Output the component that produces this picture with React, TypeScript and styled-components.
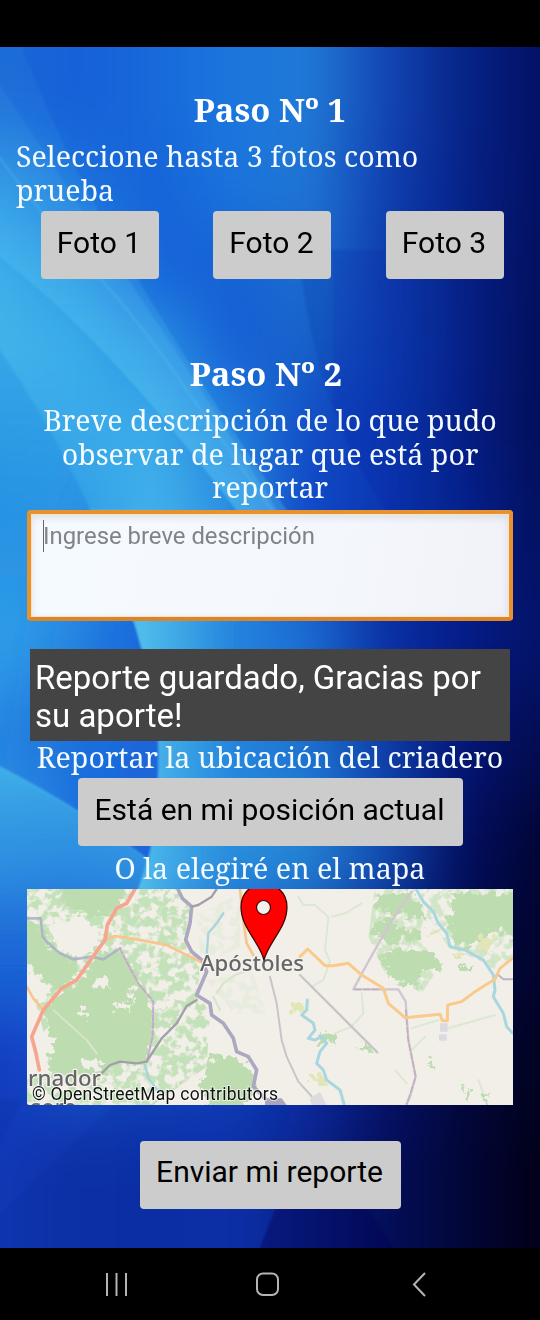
import React from "react";
import styled, { createGlobalStyle } from "styled-components";

const GlobalStyle = createGlobalStyle`
  html, body { margin: 0; padding: 0; background: #000; }
  * { box-sizing: border-box; }
`;

const SERIF = `"Noto Serif", "DejaVu Serif Condensed", "DejaVu Serif", serif`;
const SANS = `Roboto, "Liberation Sans", sans-serif`;

const Phone = styled.div`
  width: 540px;
  height: 1320px;
  display: flex;
  flex-direction: column;
  background: #000;
  overflow: hidden;
`;

const StatusBar = styled.header`
  height: 47px;
  flex: none;
`;

const Screen = styled.main`
  display: grid;
  height: 1201px;
  flex: none;
  overflow: hidden;
  > * { grid-area: 1 / 1; }
`;

const Form = styled.div`
  z-index: 1;
  display: flex;
  flex-direction: column;
  align-items: center;
  padding-top: 43px;
`;

const StepTitle = styled.h1<{ $shift?: number }>`
  margin: 0 0 9px;
  padding-right: ${(p) => p.$shift ?? 0}px;
  font: bold 32.8px/39px ${SERIF};
  font-stretch: semi-condensed;
  height: 40px;
  color: #fff;
  white-space: nowrap;
`;

const Copy = styled.p<{ $align?: string }>`
  margin: 0;
  width: 100%;
  padding: 0 16px;
  color: #f4fbff;
  text-align: ${(p) => p.$align ?? "center"};
`;

const Line = styled.span`
  display: block;
  font: 28.6px/33.5px ${SERIF};
  font-stretch: semi-condensed;
  white-space: nowrap;
`;

const PhotoRow = styled.div`
  display: flex;
  gap: 54.5px;
  margin: 5px 0 75px;
  padding-left: 4px;
`;

const Button = styled.button<{ $width: number }>`
  width: ${(p) => p.$width}px;
  height: 68px;
  border: 0;
  border-radius: 4px;
  background: #ccc;
  color: #000;
  padding: 0 1px 5px 0;
  font: 30px/36px ${SANS};
  white-space: nowrap;
`;

const Description = styled.div`
  width: 486px;
  height: 111px;
  margin: 6px 0 28px;
  padding: 5px 12px;
  border: 4px solid #e8922f;
  border-bottom-color: #dc842a;
  border-radius: 4px;
  background: linear-gradient(100deg, #f5fafe, #f5f9fe 45%, #f1f2f8);
  box-shadow: inset 0 0 0 1px #fde3c4, inset 0 3px 8px rgba(90, 100, 130, 0.18);
  font: 23.9px/34px ${SANS};
  color: #808488;
`;

const Caret = styled.span`
  display: inline-block;
  width: 1px;
  height: 32px;
  margin: -2px -1px 0 0;
  vertical-align: middle;
  background: #666;
`;

const Notice = styled.div`
  width: 480px;
  height: 92px;
  margin-bottom: -1px;
  padding: 10px 5px;
  background: #444;
  color: #fff;
  font: 33px/38.5px ${SANS};
  span { display: block; white-space: nowrap; }
`;

const Spaced = styled.div<{ $top: number }>`
  margin-top: ${(p) => p.$top}px;
  width: 100%;
  display: flex;
  flex-direction: column;
  align-items: center;
`;

const MapFrame = styled.div`
  width: 486px;
  height: 216px;
  svg { display: block; }
`;

const NavBar = styled.footer`
  height: 72px;
  flex: none;
  svg { display: block; }
`;

const bands: [number, number, string[]][] = [
  [-150, 300, ["#1a68d6", "#1560d8", "#1869da", "#1b76dd", "#2079d6", "#1346b4", "#062488", "#031064"]],
  [150, 80, ["#2a94e4", "#1c72dc", "#1562d8", "#1b74dc", "#1f74d4", "#1040b2", "#062288", "#031062"]],
  [230, 80, ["#40b0ea", "#2a98e4", "#1664da", "#1560d4", "#1c6ed0", "#0e3cae", "#052086", "#030f5e"]],
  [310, 80, ["#44b4ea", "#3caeea", "#2a94e2", "#1660d6", "#1862ca", "#0c3cb0", "#052088", "#030e5a"]],
  [390, 80, ["#36a6e8", "#3aaaea", "#3cacea", "#2080dc", "#124cc6", "#0b38b0", "#051e86", "#030e58"]],
  [470, 110, ["#2c98e6", "#309ce6", "#42b2ea", "#2c90e2", "#1048c8", "#0b36b0", "#04208c", "#031060"]],
  [580, 110, ["#2e9ce8", "#2a90e2", "#3caee6", "#2484de", "#1b6cd2", "#0a30a4", "#041c88", "#041368"]],
  [690, 100, ["#2684e0", "#1a66d8", "#34a0e4", "#2484de", "#1c70d0", "#0d3ca6", "#041678", "#030c50"]],
  [790, 110, ["#2f96e2", "#2a88e0", "#38a4e6", "#2a90de", "#2484d4", "#124cb2", "#020e60", "#010534"]],
  [900, 110, ["#1c68d8", "#1c68d8", "#1c66d4", "#1a62d0", "#1348b8", "#082388", "#020a4c", "#01042c"]],
  [1010, 110, ["#123cc0", "#1650c8", "#1448c4", "#1242c0", "#0c2ca6", "#06136e", "#02083c", "#010320"]],
  [1120, 300, ["#1138b4", "#0f30a8", "#0e2fa8", "#1030ac", "#0a2288", "#040e58", "#020638", "#010018"]],
];

function Wallpaper() {
  return (
    <svg width="540" height="1201" viewBox="0 47 540 1201" aria-hidden="true">
      <defs>
        {bands.map(([y, , stops]) => (
          <linearGradient key={y} id={`band${y + 200}`} gradientUnits="userSpaceOnUse" x1="0" y1="0" x2="540" y2="0">
            {stops.map((c, i) => <stop key={i} offset={i / 7} stopColor={c} />)}
          </linearGradient>
        ))}
        <linearGradient id="wing" gradientUnits="userSpaceOnUse" x1="20" y1="600" x2="155" y2="620">
          <stop offset="0" stopColor="#2a94e6" stopOpacity="0" />
          <stop offset=".65" stopColor="#1a6cdc" stopOpacity=".8" />
          <stop offset="1" stopColor="#1a66da" />
        </linearGradient>
        <linearGradient id="wingfade" gradientUnits="userSpaceOnUse" x1="0" y1="400" x2="0" y2="600">
          <stop offset="0" stopColor="#000" />
          <stop offset="1" stopColor="#fff" />
        </linearGradient>
        <mask id="wingmask" maskUnits="userSpaceOnUse" x="0" y="300" width="540" height="700">
          <rect y="300" width="540" height="700" fill="url(#wingfade)" />
        </mask>
        <linearGradient id="shade" gradientUnits="userSpaceOnUse" x1="0" y1="350" x2="0" y2="620">
          <stop offset="0" stopColor="#2288e0" stopOpacity=".3" />
          <stop offset=".6" stopColor="#2288e0" stopOpacity=".35" />
          <stop offset="1" stopColor="#2288e0" stopOpacity="0" />
        </linearGradient>
        <linearGradient id="dusk" gradientUnits="userSpaceOnUse" x1="300" y1="0" x2="430" y2="0">
          <stop offset="0" stopColor="#06209a" stopOpacity=".2" />
          <stop offset="1" stopColor="#06209a" stopOpacity="0" />
        </linearGradient>
        <linearGradient id="low" gradientUnits="userSpaceOnUse" x1="0" y1="765" x2="0" y2="1000">
          <stop offset="0" stopColor="#3fb0e8" />
          <stop offset=".5" stopColor="#2a86de" stopOpacity=".7" />
          <stop offset="1" stopColor="#1450cc" stopOpacity="0" />
        </linearGradient>
        <linearGradient id="glow" gradientUnits="userSpaceOnUse" x1="140" y1="0" x2="240" y2="0">
          <stop offset="0" stopColor="#50bdec" />
          <stop offset="1" stopColor="#3090e0" stopOpacity="0" />
        </linearGradient>
        <linearGradient id="ray" gradientUnits="userSpaceOnUse" x1="0" y1="60" x2="0" y2="520">
          <stop offset="0" stopColor="#5cc8f4" stopOpacity=".06" />
          <stop offset=".4" stopColor="#5cc8f4" stopOpacity=".14" />
          <stop offset="1" stopColor="#5cc8f4" stopOpacity=".3" />
        </linearGradient>
        <filter id="melt" filterUnits="userSpaceOnUse" x="-60" y="-150" width="660" height="1600" colorInterpolationFilters="sRGB">
          <feGaussianBlur stdDeviation="16 34" />
        </filter>
        <filter id="edge" x="-10%" y="-10%" width="120%" height="120%"><feGaussianBlur stdDeviation="1" /></filter>
      </defs>
      <g filter="url(#melt)">
        {bands.map(([y, h]) => <rect key={y} x="-60" y={y} width="660" height={h + 1} fill={`url(#band${y + 200})`} />)}
      </g>
      <g filter="url(#edge)">
        <path d="M-10 47 L22 47 Q62 150 112 235 Q190 370 290 515 L240 515 Q100 330 -10 250Z" fill="url(#ray)" />
        <path d="M-10 70 Q50 160 105 245 Q190 370 280 515 L240 515 Q100 330 -10 250Z" fill="url(#ray)" />
        <path d="M-10 145 Q45 220 100 278 Q130 312 160 352 Q215 430 275 515" fill="none" stroke="#67c9f3" strokeOpacity=".3" strokeWidth="2" />
        <path d="M298 250 Q318 420 390 515 Q440 560 540 590 L540 250Z" fill="url(#dusk)" />
        <path d="M-10 336 Q55 430 90 510 L120 620 L-10 620Z" fill="url(#shade)" />
        <path d="M90 510 Q150 640 158 740 Q160 810 138 890 L280 890 L260 510Z" fill="url(#glow)" />
        <g mask="url(#wingmask)">
          <path d="M-10 336 Q55 430 90 510 Q150 640 158 740 Q160 810 148 860 L-10 762Z" fill="url(#wing)" />
        </g>
        <path d="M-10 762 Q80 808 148 860 L138 890 L180 1000 L-10 1000Z" fill="url(#low)" />
        <path d="M-10 762 Q80 808 148 860" fill="none" stroke="#5cc4ee" strokeOpacity=".4" strokeWidth="2" />
        <path d="M-10 1100 L22 1100 L-10 1160Z M120 1100 L-10 1225 L-10 1258 L256 1258 Q275 1215 290 1100Z" fill="#0a2496" opacity=".16" />
        <path d="M275 1209 L256 1258 L400 1258 L350 1180Z" fill="#06104e" opacity=".4" />
      </g>
    </svg>
  );
}

function RegionMap() {
  return (
    <svg width="486" height="216" viewBox="0 0 486 216">
      <defs>
        <filter id="soft" x="-5%" y="-5%" width="110%" height="110%"><feGaussianBlur stdDeviation="2" /></filter>
        <filter id="mottle" filterUnits="userSpaceOnUse" x="0" y="0" width="780" height="700" colorInterpolationFilters="sRGB">
          <feTurbulence type="fractalNoise" baseFrequency=".036" numOctaves="3" seed="8" result="n" />
          <feColorMatrix in="n" values="0 0 0 0 .77  0 0 0 0 .885  0 0 0 0 .73  7 0 0 0 -2.95" result="g" />
          <feComposite in="g" in2="SourceGraphic" operator="in" />
          <feGaussianBlur stdDeviation="2.2" />
        </filter>
        <filter id="grain" filterUnits="userSpaceOnUse" x="0" y="0" width="780" height="700" colorInterpolationFilters="sRGB">
          <feTurbulence type="fractalNoise" baseFrequency=".045" numOctaves="3" seed="3" result="n" />
          <feDisplacementMap in="SourceGraphic" in2="n" scale="55" xChannelSelector="R" yChannelSelector="G" />
          <feGaussianBlur stdDeviation="2" />
        </filter>
      </defs>
      <rect width="486" height="216" fill="#f2efe9" />
      <g transform="translate(-7 -9) scale(.33333)" fill="none" strokeLinejoin="round" strokeLinecap="round">
        <path fill="#bddcb0" filter="url(#mottle)" d="M20 27H470L510 90L500 200L540 245L535 345L570 400L560 560L400 675H20V600L100 560L50 380L20 250Z" />
        <path fill="#bddcb0" filter="url(#mottle)" opacity=".2" d="M530 100L620 60L660 40V200L600 230L540 220Z M560 300L700 280L740 400L640 400Z" />
        <g fill="#bddcb0" filter="url(#grain)">
          <path d="M10 120L65 135L80 190L160 235L165 290L110 330L60 280L10 250Z" />
          <path d="M120 17H320L290 100L200 110L120 60Z" />
          <path d="M290 205L325 250L370 320L395 350L395 480L380 545L300 550L240 590L110 590L75 540L85 430L75 390L130 330L200 290L225 235Z" />
          <path d="M580 520L650 535L700 580L705 640L640 690H580L540 620Z" />
        </g>
        <g fill="#f2efe9" filter="url(#grain)">
          <path d="M225 290L265 300L255 325L220 315Z M290 360L335 375L330 395L285 380Z M170 390L200 385L205 420L175 410Z M55 470L100 480L95 530L70 540Z M325 330L350 340L340 370Z M190 540L250 545L240 570L185 565Z" />
          <path d="M95 120L190 110L240 150L215 215L150 225L100 190Z M25 265L60 290L95 340L60 370L25 320Z M580 420L640 480L620 520L560 500Z" />
        </g>
        <g filter="url(#soft)">
          <path d="M20 115H62L68 170L85 190L120 220L160 238L215 230L250 238L300 205" stroke="#a9aec8" strokeWidth="8" opacity=".8" />
          <path d="M300 205L325 255L355 310L400 365L398 470L380 545" stroke="#c7a9cc" strokeWidth="6" strokeDasharray="16 7" />
          <path d="M475 30L487 55L515 80L510 130L497 180L515 215L545 240L560 275L545 310L530 345L570 370L575 405L610 430L640 475L650 515L685 530L710 570L700 620L730 650L750 672" stroke="#aca8c0" strokeWidth="11" />
          <path d="M610 100L590 130L565 160L560 225M375 555L385 595L420 640" stroke="#a9d3df" strokeWidth="7" />
          <path d="M590 27L575 50L535 75L515 80M530 360L500 378L470 430L425 475L380 545L350 550L300 545L270 555L245 580" stroke="#a29fab" strokeWidth="7" />
          <path d="M100 390L200 480L230 520" stroke="#dfe5d1" strokeWidth="5" />
          <path d="M255 180L285 168L350 178L440 195L490 220L540 245M20 320L40 355L70 390M660 27L670 120L680 190L700 225" stroke="#f9c58c" strokeWidth="8" />
          <path d="M345 27L320 70L290 85L262 135L255 180L215 235L170 300L125 325L70 390L35 470L48 520L58 570" stroke="#f6a58e" strokeWidth="11" />
          <path d="M590 340L610 310L645 285L690 270M600 390L580 350M470 190L445 180" stroke="#d9e6cc" strokeWidth="7" />
        </g>
      </g>
      <g transform="translate(238 -9) scale(.33333)" fill="none" strokeLinejoin="round" strokeLinecap="round">
        <path fill="#bddcb0" filter="url(#mottle)" opacity=".7" d="M330 20H752V230L690 270L640 240L550 200L480 100L460 180L530 250L470 340L360 280L310 170Z" />
        <g fill="#bddcb0" filter="url(#grain)">
          <path d="M350 40H440L475 90L470 120L400 95L325 90Z" />
          <path d="M555 40H765V200L700 150L650 170L620 200L570 190L545 110L570 80Z" />
          <path d="M320 120L380 115L400 145L475 150L470 180L370 185L325 160Z" />
          <path d="M350 220L440 205L500 210L530 260L470 285L460 330L400 310L350 250Z" />
          <path d="M285 495H320V515H290Z M490 540H505V565H490Z M600 625H615V650H605Z M650 640H668V672H655Z M585 258H620V270H585Z M160 460H210V490H170Z" />
        </g>
        <g fill="#e1e5b7" filter="url(#grain)">
          <path d="M640 165L690 175L670 215L635 200Z M500 140H525V165H500Z M80 370H115V395H85Z M135 585L180 590L190 615L140 605Z M570 215H600V230H570Z" />
        </g>
        <g filter="url(#soft)">
          <path d="M100 50L115 75L150 75L190 110L180 210L195 245L175 300L140 320M200 110L240 100L290 70M290 340L295 400L260 440L210 460M640 600L655 640M390 570L425 610M440 445L520 420M440 510L480 470M550 445L690 405" stroke="#dbe8d2" strokeWidth="6" />
          <path d="M455 30L475 65L505 95L520 130L545 160L555 200L600 210L655 240L685 285L690 330L685 350L715 400L725 440L742 458" stroke="#a9d6df" strokeWidth="9" />
          <path d="M127 360L125 390L110 405L145 430L150 450L130 475L150 480L170 470L185 490L165 515L155 550L175 570L185 600L225 630L237 672" stroke="#a9d6df" strokeWidth="9" />
          <path d="M15 290L35 370L50 480L65 530L100 605L150 660" stroke="#c8c5c8" strokeWidth="6" />
          <path d="M105 285L250 430L337 517" stroke="#c8c5c6" strokeWidth="7" />
          <path d="M440 35L375 130L310 245L265 328H400L422 365L430 480L452 590L435 650L425 672" stroke="#d2c5d1" strokeWidth="7" />
          <path d="M270 328H345M422 390L430 480L452 590L425 672" stroke="#b3a4b3" strokeWidth="5" strokeDasharray="18 8" opacity=".6" />
          <path d="M700 285L715 298H742" stroke="#bdb5be" strokeWidth="6" />
          <path d="M105 230L128 207L180 257H205L250 250L290 285L355 325L370 370L420 413L525 403L532 422H547L548 375L590 365L630 335L690 297L705 265L742 235" stroke="#f9ca8c" strokeWidth="9" />
          <path d="M525 430H548V455H525Z M522 463H545V482H522Z" fill="#dddadf" />
          <path d="M0 655H50L65 675H0Z" fill="#aaa6bd" />
          <path d="M135 655L165 635L185 675H140Z" fill="#dedbdf" />
        </g>
      </g>
      <g fontFamily={`"Noto Sans", "Open Sans", sans-serif`} fill="#666" stroke="#f4f2ee" strokeWidth="2.500" paintOrder="stroke" strokeLinejoin="round">
        <text x="173" y="82" fontSize="22" fontWeight="500" textLength="104" lengthAdjust="spacingAndGlyphs">Apóstoles</text>
        <text x="1" y="197" fontSize="22" fontWeight="500" textLength="73" lengthAdjust="spacingAndGlyphs">rnador</text>
        <text x="-9" y="226" fontSize="22" fontWeight="500">asoro</text>
      </g>
      <path d="M237 71C232 52 214 39 214 18C214 4 224 -5 237 -5S260 4 260 18C260 39 242 52 237 71Z" fill="#f00" stroke="#300" strokeWidth="1.2" />
      <circle cx="236.500" cy="18.500" r="7" fill="#f2f0ec" stroke="#400" strokeWidth="1.2" />
      <text x="5" y="211" fontFamily="Roboto, sans-serif" fontSize="17.500" textLength="246" fill="#111" stroke="#fff" strokeOpacity=".6" strokeWidth="2" paintOrder="stroke">© OpenStreetMap contributors</text>
    </svg>
  );
}

export default function App() {
  return (
    <Phone>
      <GlobalStyle />
      <StatusBar />
      <Screen>
        <Wallpaper />
        <Form>
          <StepTitle>Paso Nº 1</StepTitle>
          <Copy $align="left">
            <Line>Seleccione hasta 3 fotos como</Line>
            <Line>prueba</Line>
          </Copy>
          <PhotoRow>
            {[1, 2, 3].map((n) => <Button key={n} $width={118}>Foto {n}</Button>)}
          </PhotoRow>
          <StepTitle $shift={8}>Paso Nº 2</StepTitle>
          <Copy>
            <Line>Breve descripción de lo que pudo</Line>
            <Line>observar de lugar que está por</Line>
            <Line>reportar</Line>
          </Copy>
          <Description><Caret />Ingrese breve descripción</Description>
          <Notice>
            <span>Reporte guardado, Gracias por</span>
            <span>su aporte!</span>
          </Notice>
          <Copy><Line>Reportar la ubicación del criadero</Line></Copy>
          <Spaced $top={5}><Button $width={385}>Está en mi posición actual</Button></Spaced>
          <Spaced $top={5}><Copy><Line>O la elegiré en el mapa</Line></Copy></Spaced>
          <Spaced $top={4}><MapFrame><RegionMap /></MapFrame></Spaced>
          <Spaced $top={36}><Button $width={261}>Enviar mi reporte</Button></Spaced>
        </Form>
      </Screen>
      <NavBar>
        <svg width="540" height="72" viewBox="0 0 540 72" fill="none" stroke="#b4b4b4" strokeWidth="2">
          <path d="M107 25V48M116.500 25V48M126 25V48" />
          <rect x="257" y="25.500" width="21" height="21.500" rx="6" />
          <path d="M425 25L414 36.500L425 48" />
        </svg>
      </NavBar>
    </Phone>
  );
}
